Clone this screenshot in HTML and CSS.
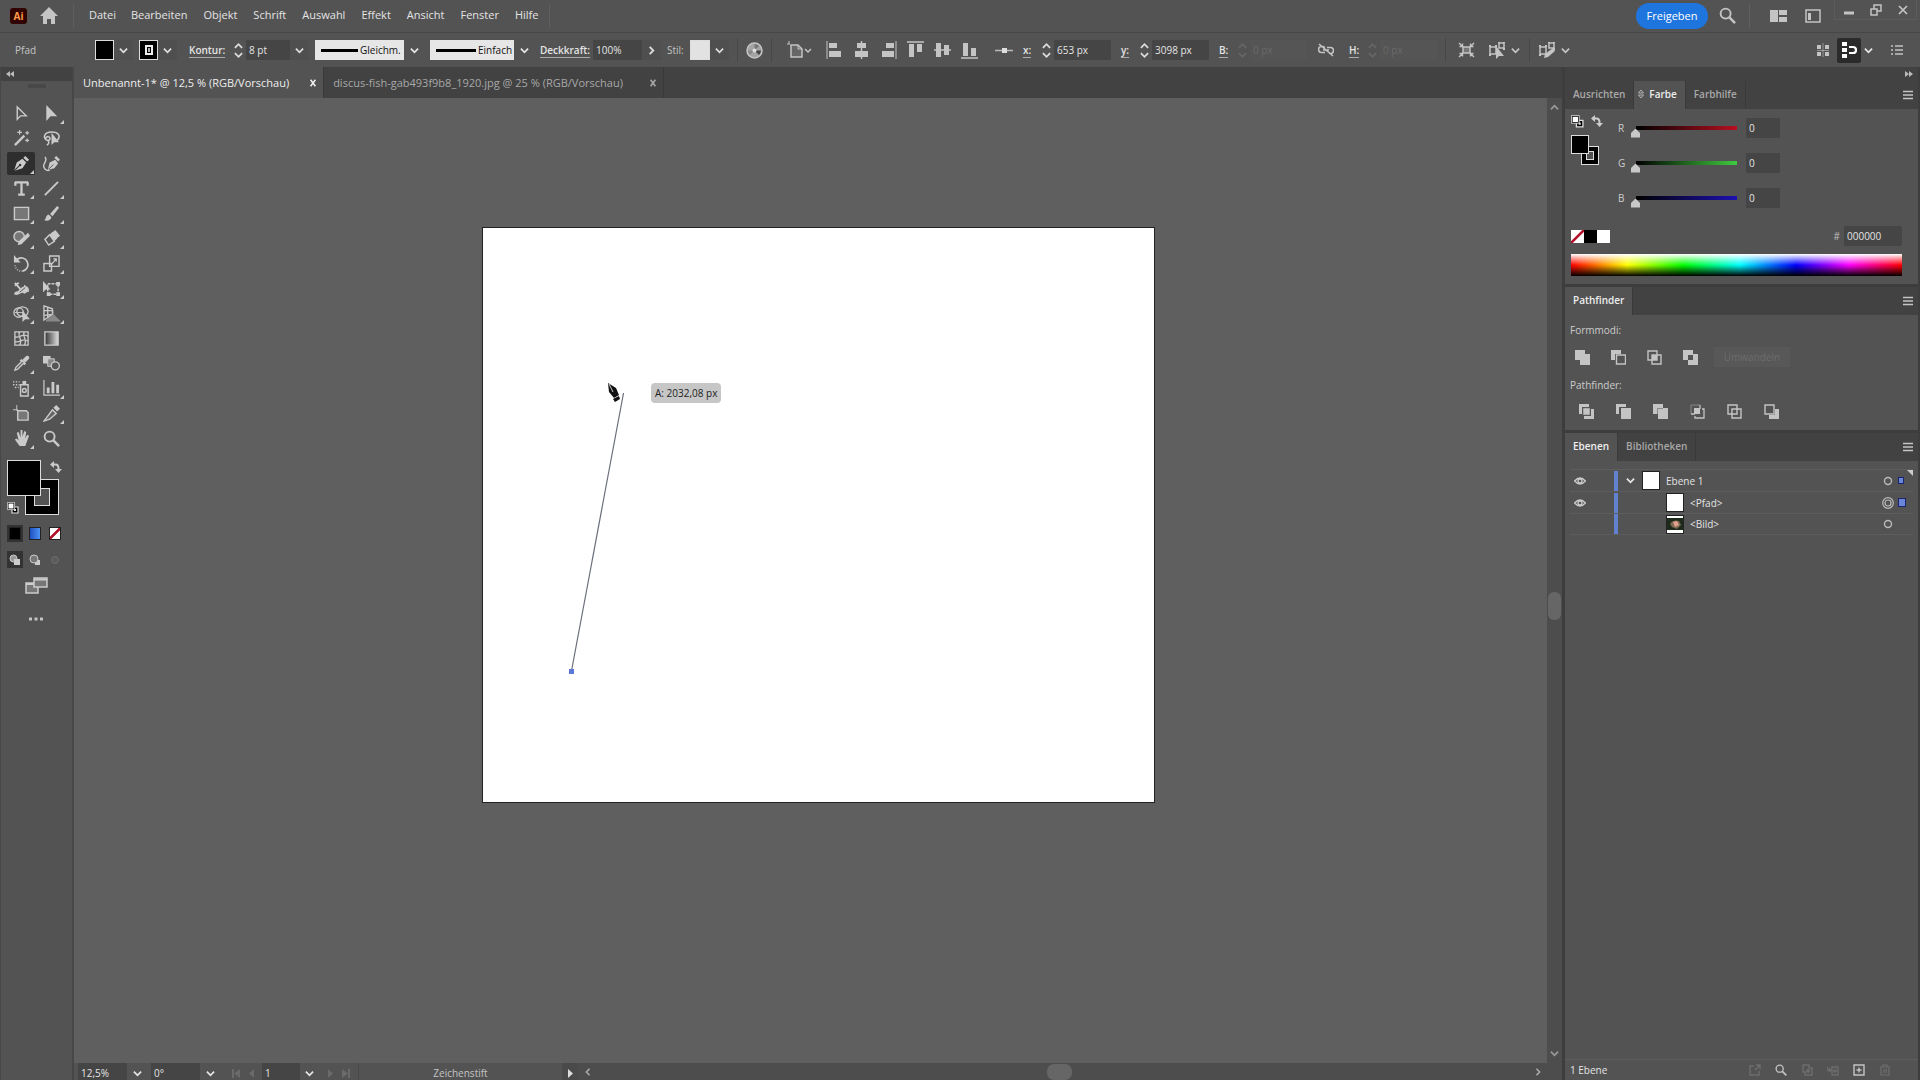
FILE: index.html
```html
<!DOCTYPE html>
<html lang="de">
<head>
<meta charset="utf-8">
<title>Unbenannt-1</title>
<link rel="stylesheet" href="styles.css">
</head>
<body>
<svg class="sprite" aria-hidden="true">
  <symbol id="chev" viewBox="0 0 10 10"><path d="M1 3l4 4 4-4" fill="none" stroke="currentColor" stroke-width="2"/></symbol>
  <symbol id="chev-r" viewBox="0 0 10 10"><path d="M3 1l4 4-4 4" fill="none" stroke="currentColor" stroke-width="2"/></symbol>
  <symbol id="chev-l" viewBox="0 0 10 10"><path d="M7 1L3 5l4 4" fill="none" stroke="currentColor" stroke-width="2"/></symbol>
  <symbol id="spin" viewBox="0 0 10 18"><path d="M1 6l4-4 4 4M1 12l4 4 4-4" fill="none" stroke="currentColor" stroke-width="2"/></symbol>
  <symbol id="cross" viewBox="0 0 10 10"><path d="M2 1l6 8M8 1L2 9" fill="none" stroke="currentColor" stroke-width="2"/></symbol>
  <symbol id="burger" viewBox="0 0 10 10"><path d="M0 1.500h10M0 5h10M0 8.500h10" fill="none" stroke="currentColor" stroke-width="1.400"/></symbol>
  <symbol id="swap" viewBox="0 0 12 12"><path d="M3.500 3.500h2q3 0 3 4v1" fill="none" stroke="currentColor" stroke-width="2"/><path d="M4 0v7L0 3.500zM5 8h7l-3.500 4z" fill="currentColor"/></symbol>
  <symbol id="defaults" viewBox="0 0 12 12"><path d="M5 5h6v6H5z" fill="#000" stroke="#ddd" stroke-width="1.200"/><path d="M7 7h2v2H7z" fill="#ddd"/><path d="M1 1h6v6H1z" fill="#fff" stroke="#000"/><path d="M.4.400h7.200v7.200H.400z" fill="none" stroke="#ddd" stroke-width=".8"/></symbol>
  <symbol id="lens" viewBox="0 0 18 18"><circle cx="7" cy="7" r="5.300" fill="none" stroke="currentColor" stroke-width="2"/><path d="M11 11l6 6" stroke="currentColor" stroke-width="2.600"/></symbol>
  <symbol id="eye" viewBox="0 0 12 8"><path d="M.6 4Q6-2 11.400 4 6 10 .6 4z" fill="none" stroke="currentColor" stroke-width="1.300"/><circle cx="6" cy="4" r="2" fill="none" stroke="currentColor" stroke-width="1.300"/></symbol>
</svg>

<header class="menubar">
  <span class="logo">Ai</span>
  <button class="icon home" aria-label="Startseite"><svg width="18" height="17" viewBox="0 0 18 17"><path d="M9 0l9 9h-3v8h-4v-5H7v5H3V9H0z" fill="currentColor"/></svg></button>
  <nav class="menu">
    <a href="#">Datei</a><a href="#">Bearbeiten</a><a href="#">Objekt</a><a href="#">Schrift</a><a href="#">Auswahl</a><a href="#">Effekt</a><a href="#">Ansicht</a><a href="#">Fenster</a><a href="#">Hilfe</a>
  </nav>
  <div class="app-tools">
    <button class="share">Freigeben</button>
    <button class="icon" aria-label="Suchen"><svg width="17" height="17"><use href="#lens"/></svg></button>
    <span class="sep"></span>
    <button class="icon" aria-label="Dokumente anordnen"><svg width="17" height="12" viewBox="0 0 17 12"><path d="M0 0h8v12H0zM9 0h8v5H9zM9 7h8v5H9z" fill="currentColor"/></svg></button>
    <button class="icon" aria-label="Arbeitsbereich"><svg width="16" height="14" viewBox="0 0 16 14"><path d="M1 1h14v12H1z" fill="none" stroke="currentColor" stroke-width="1.500"/><path d="M3 4h3v7H3z" fill="currentColor"/></svg></button>
  </div>
  <div class="window-tools">
    <button class="icon" aria-label="Minimieren"><svg width="10" height="10"><path d="M0 8h10" stroke="currentColor" stroke-width="3"/></svg></button>
    <button class="icon" aria-label="Wiederherstellen"><svg width="12" height="12" viewBox="0 0 12 12"><path d="M1 5h6v6H1zM4 5V1h7v6H7" fill="none" stroke="currentColor" stroke-width="1.500"/></svg></button>
    <button class="icon" aria-label="Schließen"><svg width="10" height="10" viewBox="0 0 10 10"><path d="M1 1l8 8M9 1L1 9" stroke="currentColor" stroke-width="1.700"/></svg></button>
  </div>
</header>

<section class="control" aria-label="Steuerung">
  <span class="context">Pfad</span>
  <div class="group"><button class="swatch black" aria-label="Fläche"></button><button class="icon drop" aria-label="Flächenfarbe"><svg><use href="#chev"/></svg></button></div>
  <div class="group"><button class="swatch black" aria-label="Konturfarbe"><svg width="8" height="10" viewBox="0 0 8 10"><path d="M1 1h6v8H1z" fill="#000" stroke="#eee" stroke-width="2"/><path d="M4 3v4" stroke="#eee" stroke-width="1.500"/></svg></button><button class="icon drop" aria-label="Konturfelder"><svg><use href="#chev"/></svg></button></div>
  <div class="group"><label class="stroke-label" for="weight"><u>Kontur:</u></label><button class="icon spin" aria-label="Konturstärke ändern"><svg><use href="#spin"/></svg></button><input class="field f-weight" id="weight" value="8 pt"><button class="icon drop" aria-label="Konturstärken"><svg><use href="#chev"/></svg></button></div>
  <div class="combo profile"><select aria-label="Breitenprofil"><option>Gleichm.</option></select><svg class="rule" width="37" height="3"><path d="M0 1.500h37" stroke="#000" stroke-width="3"/></svg><svg class="arrow"><use href="#chev"/></svg></div>
  <div class="combo brush"><select aria-label="Pinsel"><option>Einfach</option></select><svg class="rule" width="40" height="3"><path d="M0 1.500h40" stroke="#000" stroke-width="3"/></svg><svg class="arrow"><use href="#chev"/></svg></div>
  <div class="group"><label class="opacity-label" for="opacity"><u>Deckkraft:</u></label><input class="field f-opacity" id="opacity" value="100%"><button class="icon drop" aria-label="Deckkraftregler"><svg><use href="#chev-r"/></svg></button></div>
  <div class="group"><span class="style-label">Stil:</span><button class="swatch light" aria-label="Grafikstil"></button><button class="icon drop" aria-label="Grafikstile"><svg><use href="#chev"/></svg></button></div>
  <span class="sep"></span>
  <button class="icon" aria-label="Bildmaterial neu färben"><svg width="17" height="17" viewBox="0 0 17 17"><circle cx="8.500" cy="8.500" r="7.500" fill="#a4a4a4" stroke="#c4c4c4" stroke-width="1.500"/><path d="M8.500 8.500V2a6.500 6.500 0 0 1 4.600 2z" fill="#777"/><path d="M8.500 8.500H15a6.500 6.500 0 0 1-2 4.600z" fill="#444"/><path d="M8.500 8.500L4 13.100a6.500 6.500 0 0 1-2-4.600z" fill="#888"/><circle cx="8.500" cy="8.500" r="2" fill="#ddd"/></svg></button>
  <span class="sep"></span>
  <button class="icon artboard-btn" aria-label="An Zeichenfläche ausrichten"><svg width="26" height="18" viewBox="0 0 26 18"><path d="M4 4h7l4 4v8H4z" fill="#666" stroke="currentColor" stroke-width="1.500"/><path d="M11 4v4h4M0 3h3M2 0v3" fill="none" stroke="currentColor"/><path d="M18 8l3 3 3-3" fill="none" stroke="currentColor" stroke-width="1.500"/></svg></button>
  <div class="aligns">
    <button class="icon" aria-label="Links ausrichten"><svg width="17" height="18" viewBox="0 0 17 18"><path d="M1 0v18" stroke="currentColor"/><path d="M3 2h8v5H3zM3 10h12v6H3z" fill="currentColor"/></svg></button>
    <button class="icon" aria-label="Horizontal zentrieren"><svg width="17" height="18" viewBox="0 0 17 18"><path d="M8.500 0v18" stroke="currentColor" stroke-width="1.500"/><path d="M4 2h9v5H4zM2 10h13v6H2z" fill="currentColor"/></svg></button>
    <button class="icon" aria-label="Rechts ausrichten"><svg width="17" height="18" viewBox="0 0 17 18"><path d="M16 0v18" stroke="currentColor"/><path d="M6 2h8v5H6zM2 10h12v6H2z" fill="currentColor"/></svg></button>
    <button class="icon" aria-label="Oben ausrichten"><svg width="17" height="18" viewBox="0 0 17 18"><path d="M0 1h17" stroke="currentColor" stroke-width="1.500"/><path d="M2 3h5v13H2zM10 3h5v8h-5z" fill="currentColor"/></svg></button>
    <button class="icon" aria-label="Vertikal zentrieren"><svg width="17" height="18" viewBox="0 0 17 18"><path d="M0 9h17" stroke="currentColor" stroke-width="1.500"/><path d="M2 2h5v14H2zM10 4h5v10h-5z" fill="currentColor"/></svg></button>
    <button class="icon" aria-label="Unten ausrichten"><svg width="17" height="18" viewBox="0 0 17 18"><path d="M0 17h17" stroke="currentColor" stroke-width="1.500"/><path d="M2 2h5v13H2zM10 7h5v8h-5z" fill="currentColor"/></svg></button>
  </div>
  <svg class="ref-point" width="18" height="9" viewBox="0 0 18 9"><path d="M0 4.500h18" stroke="#bbb" stroke-width="1.500"/><path d="M7 2h5v5H7z" fill="#ddd"/></svg>
  <div class="group"><label class="axis" for="px"><u>x:</u></label><button class="icon spin" aria-label="x ändern"><svg><use href="#spin"/></svg></button><input class="field f-num" id="px" value="653 px"></div>
  <div class="group"><label class="axis" for="py"><u>y:</u></label><button class="icon spin" aria-label="y ändern"><svg><use href="#spin"/></svg></button><input class="field f-num" id="py" value="3098 px"></div>
  <div class="group"><label class="axis" for="pw"><u>B:</u></label><button class="icon spin" aria-label="Breite ändern" disabled><svg><use href="#spin"/></svg></button><input class="field f-num" id="pw" value="0 px" disabled></div>
  <button class="icon link-btn" aria-label="Proportionen erhalten"><svg width="16" height="14" viewBox="0 0 16 14"><path d="M7 4.500L5 3.500H3.500a3 3 0 0 0 0 6H7M9 4.500h3.500a3 3 0 0 1 0 6H11M5 7h6M1 1l14 12" fill="none" stroke="currentColor" stroke-width="1.600"/></svg></button>
  <div class="group"><label class="axis" for="ph"><u>H:</u></label><button class="icon spin" aria-label="Höhe ändern" disabled><svg><use href="#spin"/></svg></button><input class="field f-num" id="ph" value="0 px" disabled></div>
  <span class="sep"></span>
  <div class="path-tools">
    <button class="icon" aria-label="Isolieren"><svg width="17" height="16" viewBox="0 0 17 16"><path d="M5 5h7v6H5z" fill="#777" stroke="currentColor" stroke-width="1.500"/><path d="M1 1l4 4M16 1l-4 4M1 15l4-4M16 15l-4-4M1.500 4.500h3v-3M15.500 4.500h-3v-3M1.500 11.500h3v3M15.500 11.500h-3v3" fill="none" stroke="currentColor" stroke-width="1.400"/></svg></button>
    <button class="icon" aria-label="Ähnliche auswählen"><svg width="17" height="17" viewBox="0 0 17 17"><path d="M1 5h6v7H1zM10 1h5v5h-5z" fill="none" stroke="currentColor" stroke-width="1.500"/><path d="M0 4h2M6 4h2M0 13h2M9 0h2M14 0h2M14 7h2" stroke="currentColor" stroke-width="2"/><path d="M7 4v13l3-3h5z" fill="currentColor"/></svg><svg class="small-chev"><use href="#chev"/></svg></button>
    <span class="sep"></span>
    <button class="icon" aria-label="Ähnliche bearbeiten"><svg width="17" height="17" viewBox="0 0 17 17"><path d="M1 5h6v7H1zM10 1h5v5h-5z" fill="none" stroke="currentColor" stroke-width="1.500"/><path d="M0 4h2M6 4h2M0 13h2M9 0h2M14 0h2M14 7h2" stroke="currentColor" stroke-width="2"/><path d="M5 16l1-4 8-6 2 3-7 6z" fill="currentColor"/></svg><svg class="small-chev"><use href="#chev"/></svg></button>
  </div>
  <div class="snap-tools">
    <button class="icon" aria-label="Raster"><svg width="12" height="14" viewBox="0 0 12 14"><path d="M0 2h4v4H0zM8 2h4v4H8zM0 9h4v4H0zM8 9h4v4H8z" fill="currentColor"/><path d="M6 0v14M0 7.500h12" stroke="currentColor" stroke-width=".6"/></svg></button>
    <div class="group"><button class="icon snap" aria-label="Ausrichten an Pixel"><svg width="15" height="16" viewBox="0 0 15 16"><path d="M0 0h5v4H0zM0 6h5v4H0zM0 12h5v4H0z" fill="#fff"/><path d="M7 5h4a3 3 0 0 1 0 6H7" fill="none" stroke="#fff" stroke-width="2.200"/></svg></button><svg class="small-chev"><use href="#chev"/></svg></div>
    <button class="icon" aria-label="Optionen"><svg width="12" height="10" viewBox="0 0 12 10"><path d="M0 1h2M0 5h2M0 9h2M4 1h8M4 5h8M4 9h8" stroke="currentColor" stroke-width="1.500"/></svg></button>
  </div>
</section>

<main class="work">
  <aside class="tools">
    <button class="collapse" aria-label="Werkzeuge reduzieren"><svg width="8" height="6" viewBox="0 0 8 6"><path d="M4 0v6L0 3zM8 0v6L4 3z" fill="currentColor"/></svg></button>
    <div class="grip"></div>
    <div class="tool-grid">
      <button class="tool" aria-label="Auswahl"><svg viewBox="0 0 18 18"><path d="M4.500 2v13l3.500-3.500h6z" fill="none" stroke="currentColor" stroke-width="1.500"/></svg></button>
      <button class="tool more" aria-label="Direktauswahl"><svg viewBox="0 0 18 18"><path d="M3.500 0v17l4.500-5h7z" fill="currentColor"/></svg></button>
      <button class="tool" aria-label="Zauberstab"><svg viewBox="0 0 18 18"><path d="M2 16L12 6" stroke="currentColor" stroke-width="2.500"/><path d="M7 0v5M4.500 2.500h5M15 1v4M13 3h4M15 9v4M13 11h4" stroke="currentColor" stroke-width="1.200"/></svg></button>
      <button class="tool" aria-label="Lasso"><svg viewBox="0 0 18 18"><path d="M5 11C-1 9 1 2 9 2s10 5 6 9M6 7c-4 0-4 4-1 4s3-3 1-4M5 11c2 2 1 4-1 5" fill="none" stroke="currentColor" stroke-width="1.600"/><path d="M9 3v13l3-3h5z" fill="currentColor"/></svg></button>
      <button class="tool more active" aria-label="Zeichenstift"><svg viewBox="0 0 18 18"><path d="M1 17L4 8l6-4 4 4-4 6z" fill="currentColor"/><path d="M11 3l2-2 4 4-2 2z" fill="currentColor"/><path d="M1 17l6-6" stroke="#333" stroke-width="1.200"/><circle cx="7.500" cy="10.500" r="1.300" fill="#333"/></svg></button>
      <button class="tool" aria-label="Kurvenzeichner"><svg viewBox="0 0 18 18"><path d="M5 16l2-8 6-3 3 4-4 5z" fill="currentColor"/><path d="M12 3l2-2 4 4-2 2z" fill="currentColor"/><path d="M2 2c4 4-3 7-1 11 1 3 4 4 6 3" fill="none" stroke="currentColor" stroke-width="1.500"/><path d="M6 15l5-5" stroke="#535353"/></svg></button>
      <button class="tool more" aria-label="Text"><svg viewBox="0 0 18 18"><path d="M2.500 2v4M2 2.500h14M15.500 2v4M9 2v13M5.500 15.500h7" fill="none" stroke="currentColor" stroke-width="2.400"/></svg></button>
      <button class="tool more" aria-label="Linie"><svg viewBox="0 0 18 18"><path d="M2 16L16 2" stroke="currentColor" stroke-width="2"/></svg></button>
      <button class="tool more" aria-label="Rechteck"><svg viewBox="0 0 18 18"><path d="M1.500 2.500h15v13h-15z" fill="#777" stroke="currentColor" stroke-width="1.500"/></svg></button>
      <button class="tool more" aria-label="Pinsel"><svg viewBox="0 0 18 18"><path d="M1 16c3-1 1-5 5-6l3 3c-1 4-5 4-8 3zM7.500 9.500L15 1l2 2-7 9z" fill="currentColor"/></svg></button>
      <button class="tool more" aria-label="Shaper"><svg viewBox="0 0 18 18"><circle cx="6.500" cy="7" r="5.500" fill="#777" stroke="currentColor" stroke-width="1.500"/><path d="M5 16l1-4 10-9 2 3-9 9z" fill="currentColor"/></svg></button>
      <button class="tool more" aria-label="Radiergummi"><svg viewBox="0 0 18 18"><path d="M8 4l5-4 5 6-6 5z" fill="currentColor"/><path d="M7 5l-5 5 4 6 6-4z" fill="#555" stroke="currentColor" stroke-width="1.500"/><path d="M7 5l5 7 3-3-5-7z" fill="currentColor"/></svg></button>
      <button class="tool more" aria-label="Drehen"><svg viewBox="0 0 18 18"><path d="M4 5a7 7 0 1 1 6 12" fill="none" stroke="currentColor" stroke-width="1.800"/><path d="M10 17a7 7 0 0 1-8-7" fill="none" stroke="currentColor" stroke-width="1.500" stroke-dasharray="1 1.500"/><path d="M1 0v8h7z" fill="currentColor"/></svg></button>
      <button class="tool more" aria-label="Skalieren"><svg viewBox="0 0 18 18"><path d="M7 1h10v11H7zM1 9h8v8H1z" fill="none" stroke="currentColor" stroke-width="1.500"/><path d="M9 10l5-6M11 4h3v3" fill="none" stroke="currentColor" stroke-width="1.300"/></svg></button>
      <button class="tool more" aria-label="Breite"><svg viewBox="0 0 18 18"><path d="M1 15c2-5 3-1 6-5s4-1 5-5c3 3 5 1 5 8-2-2-4 3-6 1s-5 4-10 1z" fill="currentColor"/><path d="M2 3l7 8M2 6l4-3" stroke="currentColor" stroke-width="2"/><path d="M7 13l6-5" stroke="#555"/></svg></button>
      <button class="tool more" aria-label="Frei transformieren"><svg viewBox="0 0 18 18"><path d="M5 4h11v11H5z" fill="none" stroke="currentColor" stroke-width="1.500" stroke-dasharray="3 1"/><path d="M14 2h4v4h-4zM14 13h4v4h-4zM4 13h4v4H4z" fill="currentColor"/><path d="M0 1v12l3-3h5z" fill="currentColor"/></svg></button>
      <button class="tool more" aria-label="Formerstellung"><svg viewBox="0 0 18 18"><ellipse cx="6" cy="8" rx="5" ry="5" fill="none" stroke="currentColor" stroke-width="1.400"/><ellipse cx="10" cy="7" rx="6" ry="5" fill="none" stroke="currentColor" stroke-width="1.400"/><path d="M2 8h10" stroke="currentColor"/><path d="M10 6v12l3-3h5z" fill="currentColor"/></svg></button>
      <button class="tool more" aria-label="Perspektivenraster"><svg viewBox="0 0 18 18"><path d="M1 1l9 3v6l-9 6zM1 6h9M1 11l9-1M5 2v12" fill="none" stroke="currentColor" stroke-width="1.400"/><path d="M3 17l8-7 7 7zM11 6v4" fill="#888" stroke="#888"/></svg></button>
      <button class="tool" aria-label="Gitter"><svg viewBox="0 0 18 18"><path d="M2 2h14v14H2zM2 7c5 3 8-5 14 0M2 12c5 3 8-5 14 0M7 2c-3 5 4 8 0 14M12 2c-3 5 4 8 0 14" fill="none" stroke="currentColor" stroke-width="1.400"/></svg></button>
      <button class="tool" aria-label="Verlauf"><svg viewBox="0 0 18 18"><defs><linearGradient id="toolgrad"><stop stop-color="#333"/><stop offset="1" stop-color="#ddd"/></linearGradient></defs><path d="M2 2h14v14H2z" fill="url(#toolgrad)" stroke="currentColor" stroke-width="1.500"/></svg></button>
      <button class="tool more" aria-label="Pipette"><svg viewBox="0 0 18 18"><path d="M10 5l4-4c2-1 4 1 3 3l-4 4z" fill="currentColor"/><path d="M8 5l5 5" stroke="currentColor" stroke-width="2.500"/><path d="M2 16l1-3 7-7 2 2-7 7z" fill="#666" stroke="currentColor" stroke-width="1.400"/></svg></button>
      <button class="tool" aria-label="Angleichen"><svg viewBox="0 0 18 18"><path d="M0 1h8v8H0z" fill="currentColor"/><path d="M5 4h7v8H5z" fill="#888" stroke="currentColor"/><circle cx="13" cy="11.500" r="4.300" fill="#555" stroke="currentColor" stroke-width="1.400"/></svg></button>
      <button class="tool more" aria-label="Symbol aufsprühen"><svg viewBox="0 0 18 18"><path d="M8 5h8v12H8z" fill="none" stroke="currentColor" stroke-width="1.500"/><path d="M10 1h4v4h-4z" fill="currentColor"/><circle cx="12" cy="11" r="2" fill="none" stroke="currentColor" stroke-width="1.500"/><path d="M0 2h7M0 5h7M2 8h4" stroke="currentColor" stroke-width="1.500" stroke-dasharray="1.500 1.500"/></svg></button>
      <button class="tool more" aria-label="Diagramm"><svg viewBox="0 0 18 18"><path d="M1 0v16h17" fill="none" stroke="currentColor" stroke-width="1.300"/><path d="M4 8h3v6H4zM9 2h3v12H9zM14 5h3v9h-3z" fill="currentColor"/></svg></button>
      <button class="tool" aria-label="Zeichenfläche"><svg viewBox="0 0 18 18"><path d="M5 6h9l2 2v8H5z" fill="#777" stroke="currentColor" stroke-width="1.500"/><path d="M4 0v6M0 5h5" stroke="currentColor"/></svg></button>
      <button class="tool more" aria-label="Slice"><svg viewBox="0 0 18 18"><path d="M1 17L10 5l4 4-7 6z" fill="#666" stroke="currentColor" stroke-width="1.500"/><path d="M11 3l3-3 4 4-3 3z" fill="currentColor"/></svg></button>
      <button class="tool more" aria-label="Hand"><svg viewBox="0 0 18 18"><path d="M7 17L2 10l2-1 2 2-2-8 2-1 2 6V0h2v7l2-6 2 1-1 7 2-4 2 1-4 11z" fill="currentColor"/></svg></button>
      <button class="tool" aria-label="Zoom"><svg><use href="#lens"/></svg></button>
    </div>
    <div class="fill-stroke">
      <span class="big-stroke"></span>
      <span class="big-fill"></span>
      <svg class="swap" width="12" height="12"><use href="#swap"/></svg>
      <svg class="defaults" width="12" height="12"><use href="#defaults"/></svg>
    </div>
    <div class="modes">
      <button class="mode on" aria-label="Farbe"><i class="chip chip-black"></i></button>
      <button class="mode" aria-label="Verlauf"><i class="chip chip-blue"></i></button>
      <button class="mode" aria-label="Ohne"><i class="chip none"></i></button>
      <button class="mode on" aria-label="Normal zeichnen"><svg width="12" height="12" viewBox="0 0 12 12"><circle cx="4.500" cy="4.500" r="3.500" fill="#999" stroke="#ccc"/><path d="M5 5h6v6H5z" fill="#ccc"/></svg></button>
      <button class="mode" aria-label="Dahinter zeichnen"><svg width="12" height="12" viewBox="0 0 12 12"><path d="M6 6h5v5H6z" fill="#ccc"/><circle cx="5" cy="5" r="4" fill="#777" stroke="#ccc"/></svg></button>
      <button class="mode" aria-label="Innen zeichnen" disabled><svg width="12" height="12" viewBox="0 0 12 12"><circle cx="6" cy="6" r="3.500" fill="#5c5c5c" stroke="#6c6c6c"/></svg></button>
    </div>
    <button class="icon screen" aria-label="Bildschirmmodus"><svg width="23" height="17" viewBox="0 0 23 17"><path d="M1 6h12v10H1z" fill="#777" stroke="#ccc" stroke-width="1.500"/><path d="M9 1h13v9H9z" fill="#777" stroke="#ccc" stroke-width="1.500"/><path d="M9 2.500h13M1 7h8" stroke="#ccc" stroke-width="2"/></svg></button>
    <button class="icon dots" aria-label="Symbolleiste bearbeiten"><svg width="14" height="4" viewBox="0 0 14 4"><path d="M0 .5h3v3H0zM5.500.500h3v3h-3zM11 .5h3v3h-3z" fill="currentColor"/></svg></button>
  </aside>

  <section class="doc">
    <div class="doc-tabs">
      <div class="doc-tab on"><button class="tab-name">Unbenannt-1* @ 12,5 % (RGB/Vorschau)</button><button class="icon" aria-label="Tab schließen"><svg width="8" height="8"><use href="#cross"/></svg></button></div>
      <div class="doc-tab"><button class="tab-name">discus-fish-gab493f9b8_1920.jpg @ 25 % (RGB/Vorschau)</button><button class="icon" aria-label="Tab schließen"><svg width="8" height="8"><use href="#cross"/></svg></button></div>
    </div>
    <div class="canvas">
      <div class="artboard">
        <svg class="path" width="56" height="284" viewBox="0 0 56 284"><path d="M3.500 280L55.500 2" stroke="#6b6f7c" stroke-width="1.200"/><path d="M1 278h5v5H1z" fill="#5b78d8"/></svg>
        <svg class="pen" width="13" height="19" viewBox="0 0 13 19"><path d="M0 0l8 5 3 7-5 3-5-6z" fill="#111"/><path d="M5 16l6-3 1 3-5 3z" fill="#111"/><path d="M1 1l4 8" stroke="#fff" stroke-width=".8"/></svg>
        <span class="measure">A: 2032,08 px</span>
      </div>
    </div>
    <div class="vscroll"><svg width="9" height="9"><use href="#chev"/></svg><span class="vthumb"></span><svg width="9" height="9"><use href="#chev"/></svg></div>
    <footer class="status">
      <div class="combo flat zoom"><select aria-label="Zoom"><option>12,5%</option></select><svg class="arrow"><use href="#chev"/></svg></div>
      <div class="combo flat zoom"><select aria-label="Drehung"><option>0°</option></select><svg class="arrow"><use href="#chev"/></svg></div>
      <div class="pager"><button class="icon" disabled aria-label="Erste"><svg width="8" height="9" viewBox="0 0 8 9"><path d="M0 0h2v9H0zM8 0v9L2 4.500z" fill="currentColor"/></svg></button><button class="icon" disabled aria-label="Zurück"><svg width="5" height="9" viewBox="0 0 5 9"><path d="M5 0v9L0 4.500z" fill="currentColor"/></svg></button></div>
      <div class="combo flat page"><select aria-label="Zeichenfläche"><option>1</option></select><svg class="arrow"><use href="#chev"/></svg></div>
      <div class="pager"><button class="icon" disabled aria-label="Weiter"><svg width="5" height="9" viewBox="0 0 5 9"><path d="M0 0v9l5-4.500z" fill="currentColor"/></svg></button><button class="icon" disabled aria-label="Letzte"><svg width="8" height="9" viewBox="0 0 8 9"><path d="M6 0h2v9H6zM0 0v9l6-4.500z" fill="currentColor"/></svg></button></div>
      <span class="tool-name">Zeichenstift</span>
      <button class="icon play" aria-label="Statusanzeige"><svg width="5" height="9" viewBox="0 0 5 9"><path d="M0 0v9l5-4.500z" fill="currentColor"/></svg></button>
      <div class="hscroll"><svg width="8" height="8"><use href="#chev-l"/></svg><span class="hthumb"></span><svg width="8" height="8"><use href="#chev-r"/></svg></div>
    </footer>
  </section>

  <aside class="panels">
    <button class="collapse right" aria-label="Bedienfelder reduzieren"><svg width="8" height="6" viewBox="0 0 8 6"><path d="M0 0v6l4-3zM4 0v6l4-3z" fill="currentColor"/></svg></button>
    <section class="panel">
      <div class="ptabs"><button class="ptab">Ausrichten</button><button class="ptab on farbe"><svg width="6" height="10" viewBox="0 0 6 10"><path d="M.5 4L3 1l2.500 3zM.5 6L3 9l2.500-3z" fill="none" stroke="#bbb" stroke-width=".9"/></svg>Farbe</button><button class="ptab">Farbhilfe</button><button class="icon pmenu" aria-label="Menü"><svg width="10" height="10"><use href="#burger"/></svg></button></div>
      <div class="color">
        <div class="proxy">
          <svg width="13" height="13"><use href="#defaults"/></svg><svg width="12" height="12"><use href="#swap"/></svg>
          <div class="pair"><span class="small-stroke"></span><span class="small-fill"></span></div>
        </div>
        <div class="sliders">
          <label for="r">R</label><input class="range red" type="range" id="r" min="0" max="255" value="0"><input class="field" value="0" aria-label="R-Wert">
          <label for="g">G</label><input class="range green" type="range" id="g" min="0" max="255" value="0"><input class="field" value="0" aria-label="G-Wert">
          <label for="b">B</label><input class="range blue" type="range" id="b" min="0" max="255" value="0"><input class="field" value="0" aria-label="B-Wert">
        </div>
        <div class="hex-row">
          <button class="quick none" aria-label="Ohne"></button><button class="quick q-black" aria-label="Schwarz"></button><button class="quick q-white" aria-label="Weiß"></button>
          <label for="hex">#</label><input class="field hex" id="hex" value="000000">
        </div>
        <div class="spectrum"></div>
      </div>
    </section>
    <section class="panel">
      <div class="ptabs"><button class="ptab on">Pathfinder</button><button class="icon pmenu" aria-label="Menü"><svg width="10" height="10"><use href="#burger"/></svg></button></div>
      <div class="finder">
        <h3>Formmodi:</h3>
        <div class="ops shape-ops">
          <button class="icon" aria-label="Vereinen"><svg viewBox="0 0 15 15"><path d="M0 0h10v4h5v11H5v-5H0z" fill="currentColor"/></svg></button>
          <button class="icon" aria-label="Vorderes Objekt abziehen"><svg viewBox="0 0 15 15"><path d="M0 0h10v4H4v6H0z" fill="currentColor"/><path d="M5.500 5h9v9h-9z" fill="none" stroke="currentColor" stroke-width="1.400"/></svg></button>
          <button class="icon" aria-label="Schnittmenge"><svg viewBox="0 0 15 15"><path d="M1 1h9v9H1zM5 5h9v9H5z" fill="none" stroke="currentColor" stroke-width="1.400"/><path d="M5 5h5v5H5z" fill="currentColor"/></svg></button>
          <button class="icon" aria-label="Schnittmenge entfernen"><svg viewBox="0 0 15 15"><path d="M0 0h10v4h5v11H5v-5H0zM5 5v5h5V5z" fill="currentColor" fill-rule="evenodd"/></svg></button>
          <button class="expand" disabled>Umwandeln</button>
        </div>
        <h3>Pathfinder:</h3>
        <div class="ops path-ops">
          <button class="icon" aria-label="Fläche aufteilen"><svg viewBox="0 0 15 15"><path d="M0 0h10v3H3v7H0zM15 5v10H5v-3h7V5zM4 4h7v7H4z" fill="currentColor"/><path d="M4 11V4h7v7z" fill="none" stroke="#666" stroke-width=".6"/></svg></button>
          <button class="icon" aria-label="Überlappung entfernen"><svg viewBox="0 0 15 15"><path d="M0 0h10v3H3v7H0zM5 4h10v11H5z" fill="currentColor"/></svg></button>
          <button class="icon" aria-label="Verdeckte Fläche entfernen"><svg viewBox="0 0 15 15"><path d="M0 0h10v4h5v11H5v-5H0z" fill="currentColor"/><path d="M4.500 10V4.500H10" fill="none" stroke="#777" stroke-width=".8"/></svg></button>
          <button class="icon" aria-label="Schnittmengenfläche"><svg viewBox="0 0 15 15"><path d="M1 10V1h9" fill="none" stroke="#888"/><path d="M1 10h4M10 1v4M12 5h2v9H5v-2" fill="none" stroke="currentColor" stroke-width="1.300"/><path d="M4 4h6v6H4z" fill="currentColor"/></svg></button>
          <button class="icon" aria-label="Kontur aufteilen"><svg viewBox="0 0 15 15"><path d="M1 1h9v9H1zM5 5h9v9H5z" fill="none" stroke="currentColor" stroke-width="1.400"/></svg></button>
          <button class="icon" aria-label="Hinteres Objekt abziehen"><svg viewBox="0 0 15 15"><path d="M1 1h9v9H1z" fill="none" stroke="currentColor" stroke-width="1.400"/><path d="M11 5h4v10H5v-4h6z" fill="currentColor"/></svg></button>
        </div>
      </div>
    </section>
    <section class="panel grow">
      <div class="ptabs"><button class="ptab on">Ebenen</button><button class="ptab">Bibliotheken</button><button class="icon pmenu" aria-label="Menü"><svg width="10" height="10"><use href="#burger"/></svg></button></div>
      <ul class="layers">
        <li class="layer top"><svg class="eye"><use href="#eye"/></svg><span class="bar"></span><svg class="twist"><use href="#chev"/></svg><span class="thumb"></span><span class="name">Ebene 1</span><svg class="target" viewBox="0 0 12 12"><circle cx="6" cy="6" r="3.500" fill="none" stroke="currentColor" stroke-width="1.400"/></svg><span class="mark"></span></li>
        <li class="layer"><svg class="eye"><use href="#eye"/></svg><span class="bar"></span><span class="twist"></span><span class="thumb child"></span><span class="name">&lt;Pfad&gt;</span><svg class="target" viewBox="0 0 12 12"><circle cx="6" cy="6" r="5.300" fill="none" stroke="currentColor" stroke-width="1.200"/><circle cx="6" cy="6" r="3" fill="none" stroke="currentColor" stroke-width="1.200"/></svg><span class="mark big"></span></li>
        <li class="layer"><span class="eye"></span><span class="bar"></span><span class="twist"></span><span class="thumb child photo"><svg width="16" height="12" viewBox="0 0 16 12"><path d="M0 0h16v12H0z" fill="#1e2b1c"/><path d="M3 6q3-5 9-3l2 4-4 4-5-2z" fill="#7b6a50"/><path d="M6 4l4-1 2 4-4 2z" fill="#e2a091"/></svg></span><span class="name">&lt;Bild&gt;</span><svg class="target" viewBox="0 0 12 12"><circle cx="6" cy="6" r="3.500" fill="none" stroke="currentColor" stroke-width="1.400"/></svg><span></span></li>
      </ul>
      <footer class="layer-foot">
        <span class="count">1 Ebene</span>
        <button class="icon" disabled aria-label="Exportieren"><svg viewBox="0 0 12 12"><path d="M5 2H1v9h9V7M7 1h4v4M11 1L6 6" fill="none" stroke="currentColor" stroke-width="1.400"/></svg></button>
        <button class="icon" aria-label="Objekt suchen"><svg><use href="#lens"/></svg></button>
        <button class="icon" disabled aria-label="Schnittmaske"><svg viewBox="0 0 12 12"><path d="M2 1h6v3h3v7H4V8H2z" fill="none" stroke="currentColor" stroke-width="1.400"/><circle cx="7" cy="7" r="2" fill="currentColor"/></svg></button>
        <button class="icon" disabled aria-label="Neue Unterebene"><svg viewBox="0 0 12 12"><path d="M5 3h6v8H5zM6 7h4M8 5v4M0 2v4h4M2 4l2 2-2 2" fill="none" stroke="currentColor" stroke-width="1.300"/></svg></button>
        <button class="icon" aria-label="Neue Ebene"><svg viewBox="0 0 12 12"><path d="M1 1h10v10H1zM3.500 6h5M6 3.500v5" fill="none" stroke="currentColor" stroke-width="1.400"/></svg></button>
        <button class="icon" disabled aria-label="Löschen"><svg viewBox="0 0 12 12"><path d="M1 3h10M4 3V1h4v2M2 3v8h8V3M5 5v4M7 5v4" fill="none" stroke="currentColor" stroke-width="1.200"/></svg></button>
      </footer>
    </section>
  </aside>
</main>
</body>
</html>
```
FILE: styles.css
```css
:root {
  --bar: #535353;
  --dark: #424242;
  --line: #474747;
  --field: #454545;
  --ink: #e4e4e4;
  --soft: #c4c4c4;
}
* { box-sizing: border-box; }
body {
  margin: 0;
  height: 100vh;
  display: flex;
  flex-direction: column;
  overflow: hidden;
  background: var(--bar);
  color: var(--ink);
  font: 10px/16px "Open Sans", "Noto Sans", sans-serif;
}
button, input, select { font: inherit; color: inherit; border: 0; padding: 0; margin: 0; background: none; border-radius: 0; }
button { display: inline-flex; align-items: center; justify-content: center; }
svg { display: block; flex: none; }
a { color: inherit; text-decoration: none; }
h3 { margin: 0; font: inherit; }
.sprite { position: absolute; width: 0; height: 0; }
.icon { color: var(--soft); flex: none; }
.icon:disabled { color: #6e6e6e; }
.sep { flex: none; width: 1px; height: 24px; margin: 0 2px; background: #484848; }
.group { display: flex; align-items: center; flex: none; }

/* Menu bar */
.menubar { display: flex; align-items: center; height: 32px; flex: none; padding: 0 0 1px 10px; }
.logo { width: 17px; height: 16px; border-radius: 3px; background: #310300; color: #ff9a4a; font-weight: bold; text-align: center; }
.home { margin-left: 13px; }
.menu { display: flex; gap: 15px; margin-left: 15px; padding: 0 11px 2px 15px; border-left: 1px solid #5e5e5e; border-right: 1px solid #5e5e5e; font-size: 11px; line-height: 22px; }
.menu a:nth-child(n+3) { padding-left: 1px; }
.app-tools { display: flex; align-items: center; gap: 11px; margin-left: auto; }
.app-tools .sep { background: #616161; margin-right: 9px; }
.app-tools .icon:last-child { margin-left: 7px; }
.share { width: 72px; height: 26px; border-radius: 13px; background: #1f75de; color: #fff; font-size: 11px; }
.window-tools { display: flex; align-self: flex-start; margin: 0 3px 0 13px; border: 1px solid #5c5c5c; border-top: 0; }
.window-tools .icon { width: 27px; height: 19px; }

/* Control bar */
.control { display: flex; align-items: center; gap: 6px; height: 35px; flex: none; border-top: 1px solid var(--line); overflow: hidden; }
.context { width: 89px; padding-left: 15px; color: var(--soft); flex: none; }
.control u { text-decoration: none; border-bottom: 1px solid #aaa; font-weight: 600; }
.swatch { width: 19px; height: 20px; border: 1px solid #ddd; flex: none; }
.black { background: #000; }
.light { background: #e2e2e2; width: 20px; }
.drop { width: 19px; height: 20px; background: #4f4f4f; color: #ddd; }
.drop svg, .small-chev { width: 9px; height: 9px; }
.spin { width: 16px; height: 20px; }
.spin svg { width: 9px; height: 17px; color: #ddd; }
.spin:disabled svg { color: #666; }
.field { height: 20px; background: var(--field); padding: 0 3px; min-width: 0; border-radius: 1px; }
.field:disabled { background: #555; color: #696969; }
.f-weight { width: 44px; }
.f-opacity { width: 49px; }
.f-num { width: 57px; }
.stroke-label { width: 47px; padding-left: 6px; }
.opacity-label { width: 53px; }
.style-label { width: 23px; color: var(--soft); }
.axis { width: 19px; padding-left: 4px; }
.combo { display: grid; align-items: center; flex: none; grid-template-columns: 1fr 20px; }
.combo select { appearance: none; grid-area: 1 / 1 / 2 / 2; height: 20px; width: 100%; background: #e6e6e6; color: #111; }
.combo .rule { grid-area: 1 / 1; margin-left: 6px; pointer-events: none; }
.combo .arrow { grid-area: 1 / 2; justify-self: center; width: 9px; height: 9px; pointer-events: none; }
.profile { width: 109px; }
.profile select { padding-left: 45px; }
.brush { width: 104px; }
.brush select { padding-left: 48px; }
.artboard-btn { width: 33px; padding-left: 7px; }
.aligns { display: flex; gap: 10px; padding-left: 7px; }
.ref-point { margin-left: 11px; }
.link-btn { width: 26px; }
.path-tools { display: flex; align-items: center; gap: 14px; padding-left: 4px; }
.path-tools .icon { gap: 5px; }
.path-tools .sep { margin: 0 -5px; }
.snap-tools { display: flex; align-items: center; gap: 8px; margin-left: auto; padding-right: 17px; }
.snap-tools .small-chev { margin: 0 10px 0 3px; }
.snap { width: 24px; height: 25px; background: #2b2b2b; border-radius: 2px; }

/* Work area */
.work { display: grid; grid-template-columns: 74px minmax(0, 1fr) 358px; flex: 1; min-height: 0; background: var(--line); }
.collapse { display: flex; width: 100%; height: 14px; padding-left: 5px; justify-content: flex-start; background: var(--dark); color: #bbb; }
.collapse.right { justify-content: flex-end; padding-right: 5px; }
.tools { background: var(--bar); border-right: 2px solid var(--line); border-left: 1px solid var(--line); }
.grip { width: 18px; height: 4px; margin: 3px auto 0; background: #484848; }
.tool-grid { display: grid; grid-template-columns: 28px 28px; grid-auto-rows: 23px; gap: 2px; padding: 14px 0 0 6px; }
.tool { position: relative; color: #cacaca; border-radius: 2px; }
.tool svg { width: 17px; height: 17px; }
.tool.active { background: #2e2e2e; }
.tool.more::after { content: ""; position: absolute; right: 1px; bottom: 1px; border: 2px solid; border-color: transparent #ccc #ccc transparent; }
.fill-stroke { position: relative; width: 56px; height: 58px; margin: 10px 0 0 6px; }
.big-fill, .big-stroke { position: absolute; width: 34px; height: 36px; background: #000; border: 1px solid #ddd; }
.big-fill { left: 0; top: 0; }
.big-stroke { left: 18px; top: 19px; }
.big-stroke::after { content: ""; position: absolute; inset: 8px; border: 1px solid #ddd; background: var(--bar); }
.swap { position: absolute; left: 43px; top: 1px; color: #ccc; }
.defaults { position: absolute; left: 0; top: 42px; }
.modes { display: grid; grid-template-columns: 16px 16px 16px; gap: 9px 4px; padding: 7px 0 0 6px; }
.mode { height: 17px; width: 16px; }
.mode.on { background: #333; }
.chip { width: 12px; height: 13px; border: 1px solid #222; }
.chip-black { background: #000; }
.chip-blue { background: linear-gradient(90deg, #1d4fc0, #4d94f5); }
.none { background: linear-gradient(135deg, #fff 42%, #b3122a 43% 57%, #fff 58%); }
.screen { display: flex; margin: 9px 0 0 24px; }
.dots { display: flex; margin: 23px 0 0 28px; }

/* Document */
.doc { display: grid; grid-template: 31px minmax(0, 1fr) 17px / minmax(0, 1fr) 15px; }
.doc-tabs { grid-column: 1 / 3; display: flex; background: var(--dark); }
.doc-tab { display: flex; align-items: center; gap: 20px; padding: 0 6px 0 9px; color: #a8a8a8; border-right: 1px solid #3a3a3a; font-size: 11px; }
.doc-tab.on { background: var(--bar); color: #eee; }
.doc-tab .icon { color: inherit; }
.tab-name { white-space: nowrap; }
.doc-tab:last-child { gap: 26px; }
.canvas { position: relative; background: #5f5f5f; overflow: hidden; }
.artboard { position: absolute; left: 408px; top: 129px; width: 673px; height: 576px; background: #fff; border: 1px solid #222; }
.path { position: absolute; left: 85px; top: 163px; }
.pen { position: absolute; left: 125px; top: 155px; }
.measure { position: absolute; left: 168px; top: 155px; height: 20px; padding: 0 4px; border-radius: 4px; background: #c6c6c6; color: #222; line-height: 20px; white-space: nowrap; }
.vscroll { display: flex; flex-direction: column; align-items: center; justify-content: space-between; background: #4d4d4d; padding: 5px 0; color: #999; }
.vscroll svg:first-child { transform: rotate(180deg); }
.vthumb { width: 13px; height: 28px; margin-top: 50px; border-radius: 6px; background: #666; }
.status { grid-column: 1 / 3; display: flex; align-items: flex-start; background: var(--bar); padding-left: 4px; overflow: hidden; }
.status .icon { height: 20px; }
.status .icon:disabled { color: #6a6a6a; }
.combo.flat select { background: var(--field); color: var(--ink); padding-left: 3px; }
.zoom { width: 69px; margin-right: 4px; }
.page { width: 58px; }
.page .arrow { margin-right: 2px; }
.pager { display: flex; gap: 9px; justify-content: center; width: 38px; }
.tool-name { width: 204px; border-left: 1px solid #4a4a4a; text-align: center; line-height: 20px; color: var(--soft); }
.play { width: 16px; background: #4a4a4a; color: #ddd; }
.hscroll { display: flex; align-items: center; justify-content: space-between; flex: 1; height: 17px; padding: 0 20px 0 6px; background: #4d4d4d; color: #aaa; }
.hthumb { width: 25px; height: 16px; margin-right: 8px; border-radius: 7px; background: #666; }

/* Panels */
.panels { display: flex; flex-direction: column; padding: 0 2px 0 3px; background: #3d3d3d; }
.panel { background: var(--bar); margin-bottom: 3px; }
.panel.grow { flex: 1; display: flex; flex-direction: column; margin: 0; }
.ptabs { display: flex; height: 28px; background: var(--dark); flex: none; }
.ptab { padding: 0 8px 2px; color: #a8a8a8; font-weight: 600; border-right: 1px solid #3a3a3a; }
.ptab.on { background: var(--bar); color: #eee; }
.farbe { gap: 5px; padding-left: 4px; }
.pmenu { margin-left: auto; padding-right: 5px; }
.color { display: grid; grid-template-columns: 43px 1fr; padding: 6px 16px 8px 6px; }
.proxy { display: flex; flex-wrap: wrap; align-content: flex-start; gap: 7px; color: #ccc; }
.pair { position: relative; width: 28px; height: 30px; }
.small-fill, .small-stroke { position: absolute; width: 18px; height: 19px; border: 1px solid #ddd; background: #000; }
.small-fill { left: 0; top: 0; }
.small-stroke { left: 10px; top: 11px; }
.small-stroke::after { content: ""; position: absolute; inset: 4px; border: 1px solid #ddd; background: var(--bar); }
.sliders { display: grid; grid-template-columns: 17px 106px 34px; grid-auto-rows: 20px; gap: 15px 0; align-items: center; padding-top: 3px; }
.sliders label { color: #ccc; padding-left: 4px; }
.sliders .field { margin-left: 9px; width: 34px; }
.range { appearance: none; height: 20px; width: 106px; background-repeat: no-repeat; background-position: 5px 8px; background-size: 101px 4px; }
.range::-webkit-slider-thumb { appearance: none; width: 9px; height: 9px; margin-top: 10px; background: #c8c8c8; clip-path: polygon(50% 0, 100% 50%, 100% 100%, 0 100%, 0 50%); }
.red { background-image: linear-gradient(90deg, #000, #b80f20); }
.green { background-image: linear-gradient(90deg, #000, #3fcb3f); }
.blue { background-image: linear-gradient(90deg, #000, #1c10b0); }
.hex-row { grid-column: 1 / 3; display: flex; align-items: center; padding-top: 18px; }
.quick { width: 13px; height: 13px; }
.q-black { background: #000; }
.q-white { background: #fff; }
.hex-row label { margin: 0 4px 0 auto; color: #bbb; }
.hex { width: 58px; }
.spectrum { grid-column: 1 / 3; height: 22px; margin-top: 8px; background: linear-gradient(#fff, transparent 50%, #000), linear-gradient(90deg, #f00, #ff0 17%, #0f0 34%, #0ff 51%, #00f 68%, #f0f 84%, #f00); }
.finder { padding: 7px 5px 9px; color: #ccc; }
.ops { display: flex; align-items: center; }
.ops svg { width: 15px; height: 15px; }
.shape-ops { gap: 21px; height: 20px; margin: 9px 0 10px; padding-left: 5px; }
.path-ops { gap: 22px; height: 20px; margin-top: 8px; padding-left: 9px; }
.expand { width: 76px; height: 20px; margin-left: -5px; background: #585858; color: #6d6d6d; }
.layers { list-style: none; margin: 8px 5px 0; padding: 0; flex: 1; }
.layer { position: relative; display: grid; grid-template-columns: 44px 4px 24px auto 1fr 20px 15px; align-items: center; height: 22px; border-top: 1px solid #5d5d5d; }
.layer:last-child { border-bottom: 1px solid #5d5d5d; }
.layer .eye { width: 12px; height: 8px; margin-left: 4px; color: #ccc; }
.bar { height: 20px; width: 4px; background: #6080d0; }
.twist { width: 9px; height: 9px; margin-left: 8px; }
.thumb { width: 18px; height: 19px; background: #fff; border: 1px solid #222; }
.child { margin-left: 24px; }
.photo { display: flex; align-items: center; }
.name { padding-left: 6px; }
.target { width: 12px; height: 12px; justify-self: center; color: #bbb; }
.mark { width: 6px; height: 7px; background: #6b86d8; border: 1px solid #1a2570; }
.mark.big { width: 8px; height: 9px; }
.top::after { content: ""; position: absolute; right: 0; top: 0; border: 3px solid; border-color: #ccc #ccc transparent transparent; }
.layer-foot { display: flex; align-items: center; gap: 14px; height: 21px; padding: 0 27px 0 5px; border-top: 1px solid #5d5d5d; }
.layer-foot svg { width: 12px; height: 12px; }
.count { margin-right: auto; }
```
